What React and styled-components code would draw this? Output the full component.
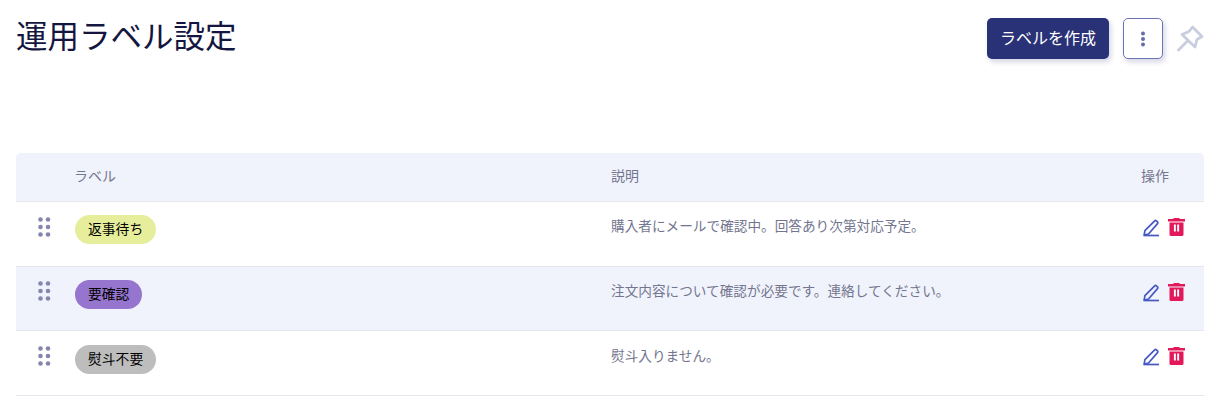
import React from "react";
import styled, { createGlobalStyle } from "styled-components";

const Global = createGlobalStyle`
  html, body { margin: 0; background: #fff; }
  body { font-family: "Noto Sans CJK JP", "Noto Sans", sans-serif; }
`;
const Page = styled.div`
  width: 1223px;
  height: 410px;
  box-sizing: border-box;
  padding: 0 19px 0 16px;
  overflow: hidden;
`;
const Header = styled.header`
  display: flex;
  justify-content: space-between;
  align-items: flex-start;
  height: 153px;
`;
const Title = styled.h1`
  margin: 12px 0 0;
  font-size: 31.5px;
  line-height: 44px;
  font-weight: 400;
  color: #14163f;
`;
const Actions = styled.div`
  display: flex;
  align-items: center;
  margin-top: 18px;
`;
const PrimaryButton = styled.button`
  height: 41px;
  width: 122px;
  padding: 0 0 3px;
  border: none;
  border-radius: 5px;
  background: #293276;
  color: #fff;
  font: 400 16px "Noto Sans CJK JP", sans-serif;
  box-shadow: 2px 3px 5px rgba(41, 50, 118, 0.2);
`;
const MoreButton = styled.button`
  display: flex;
  align-items: center;
  justify-content: center;
  width: 40px;
  height: 41px;
  margin-left: 14px;
  padding: 0;
  box-sizing: border-box;
  border: 1px solid #6d74b5;
  border-radius: 5px;
  background: #fff;
  box-shadow: 2px 3px 5px rgba(41, 50, 118, 0.2);
`;
const PinSlot = styled.div`
  display: flex;
  margin-left: 14px;
`;
const Table = styled.div`
  width: 1188px;
`;
const Row = styled.div`
  display: grid;
  grid-template-columns: 59px 536px 530px 63px;
  height: ${(p) => p.$height}px;
  box-sizing: border-box;
  border-bottom: 1px solid #e6e7ee;
  background: ${(p) => (p.$shaded ? "#f0f3fb" : "#fff")};
`;
const HeadRow = styled(Row)`
  align-items: center;
  border-radius: 5px 5px 0 0;
`;
const HeadCell = styled.div`
  font-size: 14px;
  line-height: 20px;
  margin-bottom: 4px;
  color: #74768f;
`;
const LabelHead = styled(HeadCell)`
  margin-left: -1px;
`;
const Handle = styled.div`
  display: flex;
  padding: ${(p) => p.$top}px 0 0 22px;
`;
const LabelCell = styled.div`
  padding-top: ${(p) => p.$top}px;
`;
const Badge = styled.span`
  display: inline-flex;
  align-items: center;
  height: 29px;
  padding: 0 13px 3px;
  box-sizing: border-box;
  border-radius: 15px;
  font-size: 13.8px;
  color: #000;
  background: ${(p) => p.$color};
`;
const Desc = styled.div`
  padding-top: ${(p) => p.$top}px;
  font-size: 13.65px;
  line-height: 20px;
  color: #74768f;
`;
const Ops = styled.div`
  display: flex;
  gap: 8px;
  padding: 16px 0 0 1px;
`;
const IconButton = styled.button`
  display: flex;
  width: 18px;
  height: 19px;
  padding: 0;
  border: none;
  background: none;
`;

const Dots = () => (
  <svg width="13" height="21" viewBox="0 0 13 21" fill="#8486ad">
    {[2.5, 10, 17.5].flatMap((y) =>
      [2.5, 10].map((x) => <circle key={x + "-" + y} cx={x} cy={y} r="2.3" />)
    )}
  </svg>
);
const VDots = () => (
  <svg width="6" height="16" viewBox="0 0 6 16" fill="#656da8">
    <circle cx="3" cy="2.5" r="2" />
    <circle cx="3" cy="8" r="2" />
    <circle cx="3" cy="13.5" r="2" />
  </svg>
);
const Pin = () => (
  <svg width="27" height="27" viewBox="0 0 27 27" fill="none" stroke="#c9cde0" strokeWidth="2.8" strokeLinejoin="round" strokeLinecap="round">
    <path d="M15.500 2 25 11.500 20 14.500 18 22 5 9.500 12 6.500Z" />
    <path d="M10.500 16 1.500 25" />
  </svg>
);
const Pencil = () => (
  <svg width="18" height="19" viewBox="0 0 18 19" fill="none" stroke="#4658c4" strokeWidth="1.7" strokeLinejoin="round">
    <path d="M2.200 17 2.900 12.600 12.700 2.800a1.200 1.200 0 0 1 1.700 0l1.100 1.100a1.200 1.200 0 0 1 0 1.700L6.500 16Z" />
    <path d="M1.500 17.500H17" />
  </svg>
);
const Trash = () => (
  <svg width="17" height="18" viewBox="0 0 17 18">
    <path fill="#e2185b" d="M5.500 0h6v1H17v2.500H0V1h5.500ZM1.500 4.500h14V16.500A1.500 1.500 0 0 1 14 18H3a1.500 1.500 0 0 1-1.500-1.500Z" />
    <rect x="5.900" y="6.500" width="1.900" height="7" fill="#fff" />
    <rect x="9.200" y="6.500" width="1.900" height="7" fill="#fff" />
  </svg>
);

const rows = [
  { label: "返事待ち", color: "#e6ee9c", desc: "購入者にメールで確認中。回答あり次第対応予定。", height: 65, top: 13, handle: 15 },
  { label: "要確認", color: "#9575cd", desc: "注文内容について確認が必要です。連絡してください。", height: 64, shaded: true, top: 13, handle: 14 },
  { label: "熨斗不要", color: "#bdbdbd", desc: "熨斗入りません。", height: 65, top: 14, handle: 15 },
];

export default function App() {
  return (
    <Page>
      <Global />
      <Header>
        <Title>運用ラベル設定</Title>
        <Actions>
          <PrimaryButton>ラベルを作成</PrimaryButton>
          <MoreButton aria-label="その他"><VDots /></MoreButton>
          <PinSlot><Pin /></PinSlot>
        </Actions>
      </Header>
      <Table>
        <HeadRow $height={49} $shaded>
          <span />
          <LabelHead>ラベル</LabelHead>
          <HeadCell>説明</HeadCell>
          <HeadCell>操作</HeadCell>
        </HeadRow>
        {rows.map((r) => (
          <Row key={r.label} $height={r.height} $shaded={r.shaded}>
            <Handle $top={r.handle}><Dots /></Handle>
            <LabelCell $top={r.top}><Badge $color={r.color}>{r.label}</Badge></LabelCell>
            <Desc $top={r.top}>{r.desc}</Desc>
            <Ops>
              <IconButton aria-label="編集"><Pencil /></IconButton>
              <IconButton aria-label="削除"><Trash /></IconButton>
            </Ops>
          </Row>
        ))}
      </Table>
    </Page>
  );
}
